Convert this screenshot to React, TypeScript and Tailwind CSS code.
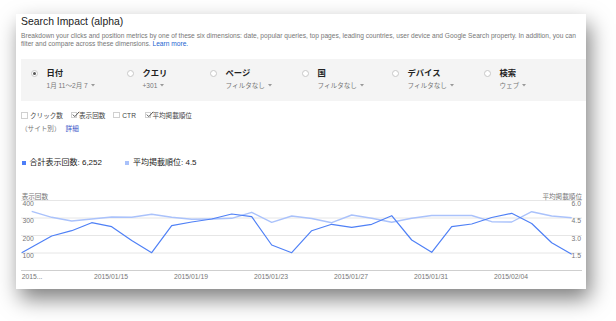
import React from "react";

const darkPts: [number, number][] = [
  [21.7, 252.7], [51.7, 236], [71.7, 230.7], [91.7, 222.7], [111.7, 226.7], [131.7, 240.5],
  [151.7, 252.7], [171.7, 225.7], [191.7, 222], [211.7, 219], [231.7, 214], [251.7, 216.7],
  [271.7, 245], [291.7, 252.7], [311.7, 230.7], [331.7, 224.3], [351.7, 227.3], [371.7, 224.3],
  [391.7, 215.7], [411.7, 240], [431.7, 252.3], [451.7, 226.7], [471.7, 224], [491.7, 217.5],
  [511.7, 213.3], [531.7, 223.5], [551.7, 242.7], [571.7, 254.3],
];
const lightPts: [number, number][] = [
  [31.7, 211.3], [51.7, 217.3], [71.7, 221], [91.7, 219], [111.7, 217], [131.7, 217.3],
  [151.7, 214.3], [171.7, 217.3], [191.7, 219.3], [211.7, 219], [231.7, 218.3], [251.7, 212.3],
  [271.7, 222.3], [291.7, 216], [311.7, 218.5], [331.7, 222.7], [351.7, 215], [371.7, 218.3],
  [391.7, 222.3], [411.7, 218.3], [431.7, 215.5], [451.7, 215.5], [471.7, 215.5], [491.7, 221.7],
  [511.7, 222], [531.7, 211.7], [551.7, 216], [571.7, 217.7],
];

const toPath = (pts: [number, number][]) =>
  pts.map(([x, y]) => `${(x - 21).toFixed(1)},${(y - 190).toFixed(1)}`).join(" ");

const Caret = () => (
  <svg width="4" height="3" viewBox="0 0 4 3" className="inline-block ml-[3px] mb-[1px]">
    <path d="M0 0 L4 0 L2 2.5 Z" fill="#999" />
  </svg>
);

const Radio = ({ checked }: { checked?: boolean }) => (
  <span className="flex h-[7px] w-[7px] items-center justify-center rounded-full border border-[#c8c8c8] bg-white">
    {checked && <span className="h-[3px] w-[3px] rounded-full bg-[#555]" />}
  </span>
);

const Check = ({ checked }: { checked?: boolean }) => (
  <span className="relative inline-block h-[6.5px] w-[6.5px] border border-[#d0d0d0] bg-white">
    {checked && (
      <svg width="8" height="7" viewBox="0 0 8 7" className="absolute left-[0px] top-[-1.5px]">
        <path d="M0.8 3.6 L2.8 5.6 L7.2 0.8" fill="none" stroke="#444" strokeWidth="0.9" />
      </svg>
    )}
  </span>
);

const cols = [
  { label: "日付", sub: "1月 11～2月 7", w: "w-[96px]", checked: true },
  { label: "クエリ", sub: "+301", w: "w-[83px]" },
  { label: "ページ", sub: "フィルタなし", w: "w-[92px]" },
  { label: "国", sub: "フィルタなし", w: "w-[90px]" },
  { label: "デバイス", sub: "フィルタなし", w: "w-[92px]" },
  { label: "検索", sub: "ウェブ", w: "w-[80px]" },
];

export default function App() {
  const ff = "Liberation Sans, Noto Sans CJK JP, sans-serif";
  return (
    <div className="relative h-[321px] w-[616px] overflow-hidden bg-white font-['Liberation_Sans','Noto_Sans_CJK_JP',sans-serif]">
      <div className="ml-[16px] mt-[14px] flex h-[275px] w-[570px] flex-col bg-white pl-[5px] pr-[4px] pt-[1px] shadow-[4px_10px_20px_rgba(0,0,0,0.5)]">
        <div className="h-[13px] text-[10.4px] leading-[13px] text-[#222]">Search Impact (alpha)</div>
        <div className="mt-[4px] whitespace-nowrap text-[6.63px] leading-[8px] text-[#777]">
          Breakdown your clicks and position metrics by one of these six dimensions: date, popular queries, top pages, leading countries, user device and Google Search property. In addition, you can
          <br />
          filter and compare across these dimensions. <span className="text-[#1a5fd0]">Learn more.</span>
        </div>
        <div className="-mr-[4px] mt-[11px] flex h-[42px] bg-[#f4f4f4] pl-[10px] pt-[9px]">
          {cols.map((c) => (
            <div key={c.label} className={`${c.w} flex flex-col`}>
              <div className="flex h-[10px] items-center gap-[8.5px]">
                <Radio checked={c.checked} />
                <span className="text-[8.3px] font-bold leading-[10px] text-[#222]">{c.label}</span>
              </div>
              <div className="mt-[3px] pl-[15.5px] text-[6.6px] leading-[9px] text-[#777]">
                {c.sub}
                <Caret />
              </div>
            </div>
          ))}
        </div>
        <div className="mt-[10px] flex h-[9px] items-center text-[6.6px] leading-[9px] text-[#444]">
          <Check />
          <span className="ml-[2.5px]">クリック数</span>
          <span className="ml-[8px]"><Check checked /></span>
          <span className="ml-[1.5px]">表示回数</span>
          <span className="ml-[8px]"><Check /></span>
          <span className="ml-[2.5px]">CTR</span>
          <span className="ml-[9px]"><Check checked /></span>
          <span className="ml-[1px]">平均掲載順位</span>
        </div>
        <div className="mt-[4px] h-[9px] text-[6.6px] leading-[9px] text-[#777]">
          （サイト別）<span className="ml-[5px] text-[#3b55c8]">詳細</span>
        </div>
        <div className="mt-[25px] flex h-[10px] items-center text-[8px] leading-[10px] text-[#222]">
          <span className="ml-[0.5px] h-[4.5px] w-[4.5px] bg-[#4d7ef7]" />
          <span className="ml-[3.5px] w-[95px]">合計表示回数: 6,252</span>
          <span className="h-[4.5px] w-[4.5px] bg-[#a9c1fa]" />
          <span className="ml-[4px]">平均掲載順位: 4.5</span>
        </div>
        <svg width="565" height="99" viewBox="0 0 565 99" className="mt-[22px] block">
          <g stroke="#e6e6e6" strokeWidth="1">
            <line x1="0" y1="10.5" x2="561" y2="10.5" />
            <line x1="0" y1="28" x2="561" y2="28" />
            <line x1="0" y1="45.5" x2="561" y2="45.5" />
            <line x1="0" y1="63" x2="561" y2="63" />
          </g>
          <line x1="0" y1="80.5" x2="561" y2="80.5" stroke="#cfcfcf" strokeWidth="1" />
          <polyline points={toPath(lightPts)} fill="none" stroke="#aac2fb" strokeWidth="1.4" strokeLinejoin="round" />
          <polyline points={toPath(darkPts)} fill="none" stroke="#4f80f6" strokeWidth="1.2" strokeLinejoin="round" />
          <g fontFamily={ff} fontSize="6.6" fill="#777">
            <text x="0.7" y="8.5">表示回数</text>
            <text x="561" y="8.5" textAnchor="end">平均掲載順位</text>
          </g>
          <g fontFamily={ff} fontSize="6.8" fill="#777">
            <text x="1.5" y="15.5">400</text>
            <text x="1.5" y="33">300</text>
            <text x="1.5" y="50.5">200</text>
            <text x="1.5" y="68">100</text>
            <text x="560" y="15.5" textAnchor="end">6.0</text>
            <text x="560" y="33" textAnchor="end">4.5</text>
            <text x="560" y="50.5" textAnchor="end">3.0</text>
            <text x="560" y="68" textAnchor="end">1.5</text>
            <text x="0.7" y="88.5">2015...</text>
            <text x="90" y="88.5" textAnchor="middle">2015/01/15</text>
            <text x="170" y="88.5" textAnchor="middle">2015/01/19</text>
            <text x="250" y="88.5" textAnchor="middle">2015/01/23</text>
            <text x="330" y="88.5" textAnchor="middle">2015/01/27</text>
            <text x="410" y="88.5" textAnchor="middle">2015/01/31</text>
            <text x="490" y="88.5" textAnchor="middle">2015/02/04</text>
          </g>
        </svg>
      </div>
    </div>
  );
}
